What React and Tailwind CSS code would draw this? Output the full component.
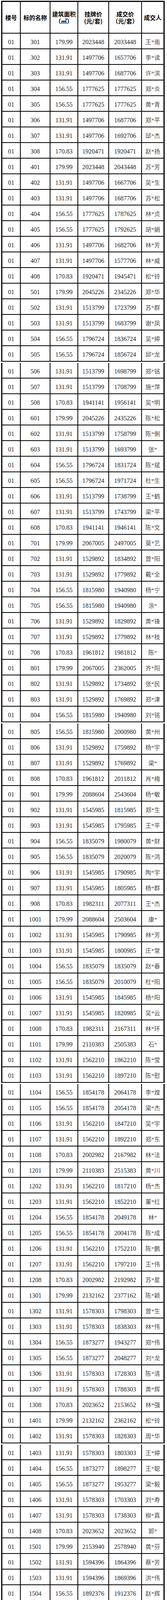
import React from "react";

const raw = `301 179.99 2023448 2033448 王*南
302 131.91 1497706 1657706 李*读
303 131.91 1497706 1687706 许*滨
304 156.55 1777625 1777625 郑*炎
305 156.55 1777625 1777625 黄*青
306 131.91 1497706 1687706 郑*平
307 131.91 1497706 1692706 邱*杰
308 170.83 1920471 1920471 赵*扬
401 179.99 2023448 2043448 苏*芳
402 131.91 1497706 1667706 吴*生
403 131.91 1497706 1687706 苏*松
404 156.55 1777625 1787625 林*贞
405 156.55 1777625 1792625 胡*娟
406 131.91 1497706 1682706 林*芳
407 131.91 1497706 1577706 林*威
408 170.83 1920471 1945471 松*铃
501 179.99 2045226 2345226 郑*华
502 131.91 1513799 1723799 苏*群
503 131.91 1513799 1683799 谢*凤
504 156.55 1796724 1836724 吴*婷
505 156.55 1796724 1856724 邱*龙
506 131.91 1513799 1698799 郑*铭
507 131.91 1513799 1708799 施*萍
508 170.83 1941141 1956141 吴*明
601 179.99 2045226 2435226 陈*松
602 131.91 1513799 1758799 陈*俐
603 131.91 1513799 1693799 张*
604 156.55 1796724 1831724 陈*斌
605 156.55 1796724 1971724 杜*生
606 131.91 1513799 1738799 王*鹤
607 131.91 1513799 1743799 梁*平
608 170.83 1941141 1946141 陈*文
701 179.99 2067005 2497005 莫*艺
702 131.91 1529892 1834892 曾*阳
703 131.91 1529892 1779892 戴*全
704 156.55 1815980 1940980 杨*宁
705 156.55 1815980 1940980 涂*
706 131.91 1529892 1829892 黄*锋
707 131.91 1529892 1779892 林*枝
708 170.83 1961812 1981812 陈*
801 179.99 2067005 2362005 齐*阳
802 131.91 1529892 1734892 张*民
803 131.91 1529892 1769892 郑*津
804 156.55 1815980 1940980 刘*铭
805 156.55 1815980 2000980 黄*州
806 131.91 1529892 1759892 杨*宇
807 131.91 1529892 1769892 梁*
808 170.83 1961812 2011812 肖*梅
901 179.99 2088604 2543604 杨*敏
902 131.91 1545985 1815985 郑*生
903 131.91 1545985 1795985 王*平
904 156.55 1835079 1980079 黄*财
905 156.55 1835079 2020079 陈*鸿
906 131.91 1545985 1790985 陶*宇
907 131.91 1545985 1805985 杨*群
908 170.83 1982311 2077311 王*杰
1001 179.99 2088604 2503604 康*
1002 131.91 1545985 1790985 林*芳
1003 131.91 1545985 1800985 庄*堂
1004 156.55 1835079 1835079 赵*春
1005 156.55 1835079 2010079 杜*阳
1006 131.91 1545985 1845985 杨*阳
1007 131.91 1545985 1820985 吴*云
1008 170.83 1982311 2167311 林*环
1101 179.99 2110383 2505383 石*
1102 131.91 1562210 1862210 陈*莹
1103 131.91 1562210 1897210 陈*慰
1104 156.55 1854178 2064178 李*煌
1105 156.55 1854178 2054178 梁*杰
1106 131.91 1562210 1847210 吴*宇
1107 131.91 1562210 1892210 郑*东
1108 170.83 2002982 2167982 林*法
1201 179.99 2110383 2515383 黄*川
1202 131.91 1562210 1817210 杨*杰
1203 131.91 1562210 1852210 董*红
1204 156.55 1854178 2049178 林*
1205 156.55 1854178 2004178 陈*成
1206 131.91 1562210 1752210 陈*鹏
1207 131.91 1562210 1797210 王*伟
1208 170.83 2002982 2192982 苏*星
1301 179.99 2132162 2377162 陈*颖
1302 131.91 1578303 1798303 曾*生
1303 131.91 1578303 1838303 林*伟
1304 156.55 1873277 1943277 郑*伟
1305 156.55 1873277 2048277 刘*龙
1306 131.91 1578303 1728303 陈*清
1307 131.91 1578303 1788303 黄*辉
1308 170.83 2023652 2153652 林*强
1401 179.99 2132162 2362162 松*铃
1402 131.91 1578303 1828303 周*华
1403 131.91 1578303 1803303 王*婷
1404 156.55 1873277 1898277 王*聪
1405 156.55 1873277 1953277 梁*毅
1406 131.91 1578303 1703303 刘*寿
1407 131.91 1578303 1738303 柳*真
1408 170.83 2023652 2023652 郭*
1501 179.99 2153940 2578940 黄*芬
1502 131.91 1594396 1864396 蔡*芳
1503 131.91 1594396 1869396 洪*伟
1504 156.55 1892376 1912376 赵*辉
1505 156.55 1892376 1977376 张*斌
1506 131.91 1594396 1799396 陈*凌
1507 131.91 1594396 1809396 蒋*金
1508 170.83 2044323 2064323 徐*珠
1601 179.99 2153940 2548940 王*勇
1602 131.91 1594396 1799396 刘*婷
1603 131.91 1594396 1764396 刘*强
1604 156.55 1892376 1992376 陈*超
1605 156.55 1892376 1967376 黄*坤
1606 131.91 1594396 1744396 邱*锋
1607 131.91 1594396 1719396 张*燕
1608 170.83 2044323 2054323 李*峰`;

const rows = raw.split("\n").map((l) => l.trim().split(" "));
const segments = [
  [0, 21],
  [21, 44],
  [44, 67],
  [67, 90],
  [90, 112],
];

const numCell =
  "flex items-center justify-center pt-[6px] border-r-2 border-black text-[16px] leading-[18px] text-[#1e1e1e] font-['Liberation_Serif','Noto_Sans_CJK_SC',serif]";

function Row({ r }) {
  return (
    <div className="flex box-border h-[40px] max-h-[40px] min-h-0 overflow-hidden border-b-2 border-black">
      <div className={`w-[47px] ${numCell}`}>01</div>
      <div className={`w-[76px] ${numCell}`}>{r[0]}</div>
      <div className={`w-[71px] ${numCell}`}>{r[1]}</div>
      <div className={`w-[79px] ${numCell}`}>{r[2]}</div>
      <div className={`w-[84px] ${numCell}`}>{r[3]}</div>
      <div className="w-[55px] flex items-center justify-center pt-[6px] text-[15px] leading-[18px] whitespace-nowrap text-[#4d4d4d] font-['Liberation_Serif','Noto_Sans_CJK_SC',serif]">
        {r[4]}
      </div>
    </div>
  );
}

const headCell =
  "flex flex-col items-center justify-center border-r-2 border-black text-[15px] leading-[18px] font-bold text-black font-['Noto_Sans_CJK_SC',sans-serif]";

function Header() {
  return (
    <div className="flex box-border h-[81px] max-h-[81px] overflow-hidden border-b-2 border-black">
      <div className={`w-[47px] ${headCell}`}>楼号</div>
      <div className={`w-[76px] ${headCell}`}>标的名称</div>
      <div className={`w-[71px] ${headCell}`}>
        <span>建筑面积</span>
        <span>（㎡）</span>
      </div>
      <div className={`w-[79px] ${headCell}`}>
        <span>挂牌价</span>
        <span>(元/套)</span>
      </div>
      <div className={`w-[84px] ${headCell}`}>
        <span>成交价</span>
        <span>（元/套）</span>
      </div>
      <div className="w-[55px] flex items-center justify-center text-[15px] leading-[18px] font-bold text-black font-['Noto_Sans_CJK_SC',sans-serif]">
        成交人
      </div>
    </div>
  );
}

export default function App() {
  return (
    <div className="w-[427px] bg-white pt-[2px] pl-[3px] pb-[4px]">
      <div className="flex flex-col gap-[3px]">
        {segments.map(([a, b], i) => (
          <div
            key={i}
            className={`w-[418px] border-x-[3px] border-black ${
              i === 0 ? "border-t-[3px]" : ""
            }`}
          >
            {i === 0 && <Header />}
            {rows.slice(a, b).map((r) => (
              <Row key={r[0]} r={r} />
            ))}
          </div>
        ))}
      </div>
    </div>
  );
}
